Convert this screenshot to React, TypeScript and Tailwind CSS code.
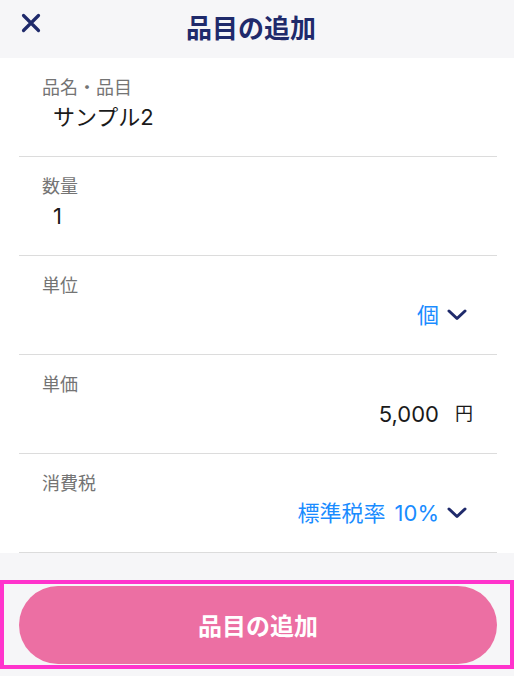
const font = { fontFamily: '"Noto Sans CJK JP", "Noto Sans", sans-serif' };
const valueFont = { fontFamily: 'Inter, "Noto Sans CJK JP", sans-serif' };

function Chevron() {
  return (
    <svg width="20" height="12" viewBox="0 0 20 12" fill="none" className="ml-[8px]">
      <path d="M2 2 L10 9.5 L18 2" stroke="#1f2a6b" strokeWidth="3" strokeLinecap="round" strokeLinejoin="round" />
    </svg>
  );
}

function Row({ label, children, right }: { label: string; children: React.ReactNode; right?: boolean }) {
  return (
    <div className="h-[99px] mx-[19px] mr-[17px] border-b-[1.5px] border-[#dcdcdc] flex flex-col">
      <div className="pl-[23px] pt-[16px] text-[18px] leading-[24px] text-[#747474]">{label}</div>
      <div
        style={valueFont}
        className={
          right
            ? "mt-[5px] h-[28px] flex items-center justify-end pr-[30px] text-[22px] leading-[28px]"
            : "mt-[5px] h-[28px] flex items-center pl-[34px] text-[22px] leading-[28px] text-[#1a1a1a]"
        }
      >
        {children}
      </div>
    </div>
  );
}

export default function App() {
  return (
    <div className="w-[514px] h-[676px] bg-[#f6f6f8] flex flex-col overflow-hidden" style={font}>
      <div className="h-[58px] relative flex items-center justify-center">
        <svg width="20" height="20" viewBox="0 0 20 20" className="absolute left-[21px] top-[13px]">
          <path d="M2.5 2.5 L17.5 17.5 M17.5 2.5 L2.5 17.5" stroke="#1f2a6b" strokeWidth="3.2" strokeLinecap="round" />
        </svg>
        <h1 className="text-[26px] font-bold text-[#1f2a6b] leading-none -mt-[4px] -ml-[12px]">品目の追加</h1>
      </div>

      <div className="bg-white">
        <Row label="品名・品目">サンプル2</Row>
        <Row label="数量">1</Row>
        <Row label="単位" right>
          <span className="text-[#1a8cff]">個</span>
          <Chevron />
        </Row>
        <Row label="単価" right>
          <span className="text-[#1a1a1a]">5,000</span>
          <span className="text-[18px] text-[#1a1a1a] ml-[16px] -mr-[6px]">円</span>
        </Row>
        <Row label="消費税" right>
          <span className="text-[#1a8cff]">標準税率</span>
          <span className="text-[#1a8cff] ml-[9px]">10%</span>
          <Chevron />
        </Row>
      </div>

      <div className="mt-[27px] w-[514px] border-[4px] border-[#ff33cc] pt-[2px] pb-[1px] pl-[15px] pr-[12px]">
        <button className="w-[478px] h-[78px] rounded-full bg-[#ec6fa3] text-white text-[24px] font-bold">
          品目の追加
        </button>
      </div>
    </div>
  );
}
